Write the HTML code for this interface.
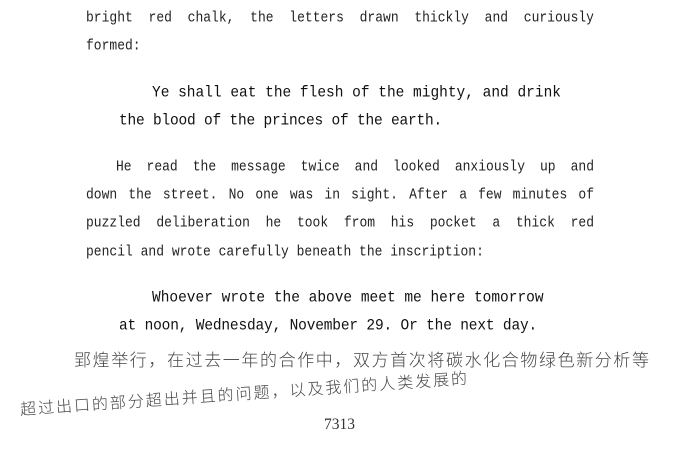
<!DOCTYPE html>
<html><head><meta charset="utf-8"><style>
html,body{margin:0;padding:0;background:#fff;width:680px;height:467px;overflow:hidden;position:relative}
.b{position:absolute;left:86px;width:508px;font-family:"Liberation Mono",monospace;font-size:13px;color:#222;text-align:justify;text-align-last:justify;white-space:nowrap;line-height:18px;transform:scaleY(1.15)}
.b.l{text-align-last:left}
.q{position:absolute;font-family:"Liberation Mono",monospace;font-size:14.5px;color:#111;white-space:nowrap;line-height:18px;transform:scaleY(1.1)}
.h{position:absolute;font-family:"Noto Sans CJK SC",sans-serif;font-weight:300;color:#444;white-space:nowrap;transform-origin:left center}
</style></head><body>
<div class="b" style="top:9px">bright red chalk, the letters drawn thickly and curiously</div>
<div class="b l" style="top:37px">formed:</div>
<div class="q" style="left:152px;top:84px">Ye shall eat the flesh of the mighty, and drink</div>
<div class="q" style="left:119px;top:112px;letter-spacing:-0.2px">the blood of the princes of the earth.</div>
<div class="b" style="top:158px">&nbsp;&nbsp;He read the message twice and looked anxiously up and</div>
<div class="b" style="top:186px">down the street. No one was in sight. After a few minutes of</div>
<div class="b" style="top:214px">puzzled deliberation he took from his pocket a thick red</div>
<div class="b l" style="top:243px">pencil and wrote carefully beneath the inscription:</div>
<div class="q" style="left:152px;top:289px">Whoever wrote the above meet me here tomorrow</div>
<div class="q" style="left:119px;top:317px;letter-spacing:-0.17px">at noon, Wednesday, November 29. Or the next day.</div>
<div class="h" style="left:74px;top:346px;font-size:17px;letter-spacing:1.6px">郢煌举行，在过去一年的合作中，双方首次将碳水化合物绿色新分析等</div>
<div class="h" style="left:20px;top:396px;font-size:16px;letter-spacing:2px;transform:rotate(-4deg)">超过出口的部分超出并且的问题，以及我们的人类发展的</div>
<div style="position:absolute;left:324px;top:416px;font-family:'Liberation Serif',serif;font-size:15.5px;color:#333">7313</div>
</body></html>
